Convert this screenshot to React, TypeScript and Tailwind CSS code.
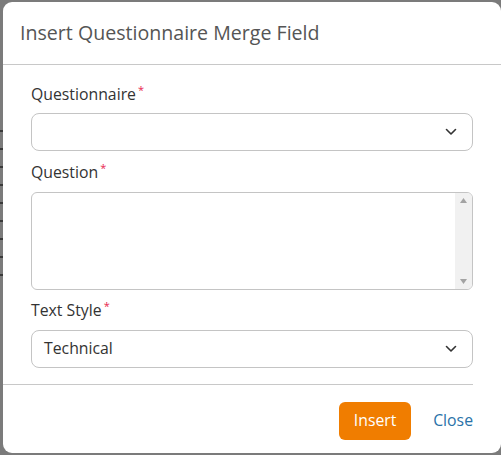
import React from "react";

const Chevron = () => (
  <svg width="12" height="8" viewBox="0 0 12 8" fill="none">
    <path d="M1.5 1.5 L6 6 L10.5 1.5" stroke="#333" strokeWidth="1.6" strokeLinecap="round" strokeLinejoin="round" />
  </svg>
);

const Label = ({ children }: { children: React.ReactNode }) => (
  <div className="flex items-start text-[15.8px] leading-[20px] h-[20px] text-[#333]">
    <span>{children}</span>
    <span className="ml-[2px] text-[11px] leading-[12px] text-[#e8264f]">*</span>
  </div>
);

const marks = [122, 145, 163, 181, 199, 216, 234, 251, 271];

export default function App() {
  return (
    <div
      className="w-[501px] h-[455px] bg-[#7b7b7b] overflow-hidden pt-[2px] flex"
      style={{ fontFamily: "'Open Sans', 'Noto Sans', sans-serif" }}
    >
      <div className="w-[3px] shrink-0 flex flex-col">
        {marks.map((y, i) => (
          <div key={i} className="h-[18px] flex items-center first:mt-[120px]">
            <div className="w-[3px] h-[2px] bg-[#3a3a3a]" />
          </div>
        ))}
      </div>
      <div className="w-[498px] h-[451px] shrink-0 bg-white rounded-[9px] flex flex-col">
        <div className="h-[63px] shrink-0 flex items-center pl-[17px] border-b border-[#c8c8c8]">
          <span className="text-[19.6px] text-[#555]">Insert Questionnaire Merge Field</span>
        </div>
        <div className="flex flex-col shrink-0 pl-[28px] w-[470px] pt-[19px] h-[320px] border-b border-[#c8c8c8]">
          <Label>Questionnaire</Label>
          <div className="mt-[9px] h-[38px] border border-[#c4c4c4] rounded-[8px] flex items-center justify-end pr-[15px]">
            <Chevron />
          </div>
          <div className="mt-[11px]">
            <Label>Question</Label>
          </div>
          <div className="mt-[10px] h-[98px] border border-[#c4c4c4] rounded-[6px] flex justify-end overflow-hidden">
            <div className="w-[17px] h-full bg-[#f1f1f1] flex flex-col items-center justify-between py-[5px]">
              <svg width="7" height="5" viewBox="0 0 7 5"><path d="M0 5 L3.5 0 L7 5 Z" fill="#a3a3a3" /></svg>
              <svg width="7" height="5" viewBox="0 0 7 5"><path d="M0 0 L3.5 5 L7 0 Z" fill="#a3a3a3" /></svg>
            </div>
          </div>
          <div className="mt-[10px]">
            <Label>Text Style</Label>
          </div>
          <div className="mt-[10px] h-[38px] border border-[#c4c4c4] rounded-[8px] flex items-center justify-between pl-[12px] pr-[15px]">
            <span className="text-[15.8px] text-[#333]">Technical</span>
            <Chevron />
          </div>
        </div>
        <div className="flex items-center justify-end w-[470px] pt-[17px] gap-[22px]">
          <button className="h-[38px] w-[72px] bg-[#f07d00] rounded-[6px] text-white text-[15.8px]">Insert</button>
          <span className="text-[15.8px] text-[#2a72a8]">Close</span>
        </div>
      </div>
    </div>
  );
}
